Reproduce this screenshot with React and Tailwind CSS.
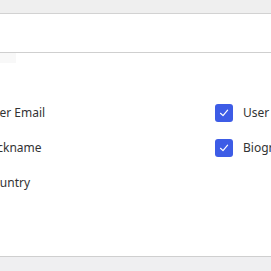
import React from "react";

const Check = ({ label, checked }) => (
  <div className="h-[18px] flex items-center gap-[10px]">
    <div
      className={`w-[18px] h-[18px] rounded-[3px] flex items-center justify-center ${
        checked ? "bg-[#3d5ce6]" : "border border-[#bbb] bg-white"
      }`}
    >
      {checked && (
        <svg width="10" height="10" viewBox="0 0 10 10" fill="none">
          <path d="M1.5 5.3 L4 7.6 L8.6 2.2" stroke="white" strokeWidth="1.2" strokeLinecap="round" strokeLinejoin="round" />
        </svg>
      )}
    </div>
    <span className="text-[12px] text-[#333] whitespace-nowrap">{label}</span>
  </div>
);

const App = () => {
  return (
    <div
      className="w-[271px] h-[271px] overflow-hidden bg-white flex flex-col"
      style={{ fontFamily: '"Noto Sans", "Open Sans", sans-serif' }}
    >
      <div className="h-[14px] shrink-0 bg-[#efefef] border-b border-[#d2d2d2]"></div>
      <div className="h-[39px] shrink-0 bg-white border-b border-[#cfcfcf]"></div>
      <div className="w-[16px] h-[10px] shrink-0 bg-[#f8f8f8]"></div>
      <div className="flex-1 pt-[41px]">
        <div className="-ml-[43px] grid grid-cols-[258px_258px] w-max">
          <div className="flex flex-col gap-[17px]">
            <Check label="User Email" checked />
            <Check label="Nickname" checked />
            <Check label="Country" checked />
          </div>
          <div className="flex flex-col gap-[17px]">
            <Check label="User Name" checked />
            <Check label="Biography" checked />
          </div>
        </div>
      </div>
      <div className="h-[15px] shrink-0 bg-[#efeff1] border-t border-[#cfcfcf]"></div>
    </div>
  );
};

export default App;
